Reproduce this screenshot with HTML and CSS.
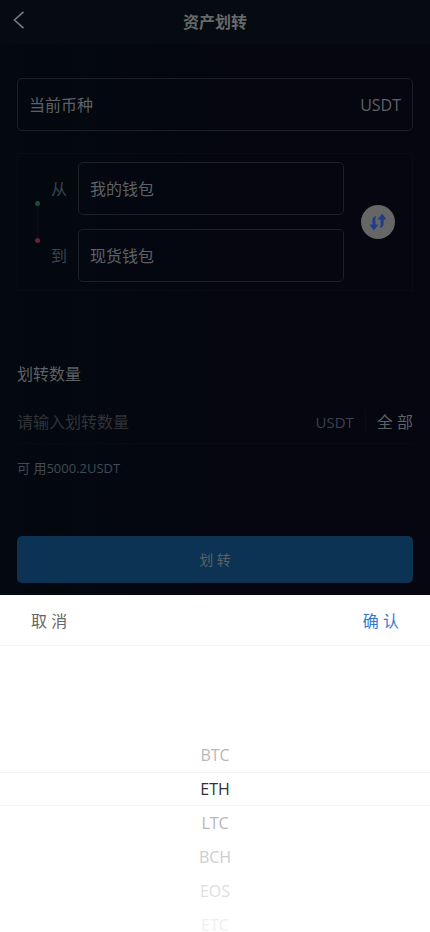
FILE: index.html
```html
<!DOCTYPE html>
<html lang="zh-CN">

<head>
    <meta charset="UTF-8">
    <meta name="viewport" content="width=device-width, initial-scale=1.0">
    <title>资产划转</title>
    <link rel="stylesheet" href="styles.css">
</head>

<body>
    <header class="nav">
        <button class="nav-back" type="button" aria-label="返回">
            <svg width="12" height="18" viewBox="0 0 12 18" fill="none" stroke="currentColor" stroke-width="1.6">
                <path d="M10.5 .8 L1.500 9 L10.5 17.200" />
            </svg>
        </button>
        <h1 class="nav-title">资产划转</h1>
    </header>

    <main class="page">
        <button class="coin" type="button">
            <span>当前币种</span>
            <span>USDT</span>
        </button>

        <section class="transfer">
            <div class="route">
                <span class="dot dot-from"></span>
                <span class="route-line"></span>
                <span class="dot dot-to"></span>
            </div>
            <div class="wallets">
                <div class="wallet-row">
                    <label class="wallet-label" for="from">从</label>
                    <select class="wallet" id="from">
                        <option>我的钱包</option>
                        <option>现货钱包</option>
                    </select>
                </div>
                <div class="wallet-row">
                    <label class="wallet-label" for="to">到</label>
                    <select class="wallet" id="to">
                        <option>现货钱包</option>
                        <option>我的钱包</option>
                    </select>
                </div>
            </div>
            <button class="swap" type="button" aria-label="交换">
                <svg width="18" height="18" viewBox="0 0 18 18">
                    <path d="M7.5 3 C4.6 3.4 3.4 5 3.4 7.5 V11.5 H.5 L4.9 17.5 L9.300 11.5 H6.400 V7 C6.400 5.200 6.600 4 7.5 3 Z" />
                    <path d="M10.5 15 C13.400 14.600 14.600 13 14.600 10.5 V6.5 H17.5 L13.100 .5 L8.700 6.5 H11.600 V11 C11.600 12.800 11.400 14 10.5 15 Z" />
                </svg>
            </button>
        </section>

        <label class="amount-title" for="amount">划转数量</label>
        <div class="amount">
            <input class="amount-input" id="amount" type="text" placeholder="请输入划转数量">
            <span class="amount-unit">USDT</span>
            <button class="amount-all" type="button">全 部</button>
        </div>
        <p class="available">可 用5000.2USDT</p>

        <button class="submit" type="button">划 转</button>
    </main>

    <section class="picker">
        <div class="picker-bar">
            <button class="picker-btn" type="button">取 消</button>
            <button class="picker-btn picker-ok" type="button">确 认</button>
        </div>
        <ul class="picker-list" role="listbox" aria-label="币种">
            <li class="picker-item near" role="option">BTC</li>
            <li class="picker-item active" role="option" aria-selected="true">ETH</li>
            <li class="picker-item near" role="option">LTC</li>
            <li class="picker-item mid" role="option">BCH</li>
            <li class="picker-item far" role="option">EOS</li>
            <li class="picker-item last" role="option">ETC</li>
        </ul>
    </section>
</body>

</html>
```
FILE: styles.css
```css
* {
    box-sizing: border-box;
}

body {
    margin: 0;
    height: 100vh;
    display: flex;
    flex-direction: column;
    overflow: hidden;
    background: linear-gradient(to right, #030910, #05060f 50%);
    color: #5e6165;
    font-family: "Open Sans", "Noto Sans CJK SC", sans-serif;
    font-size: 16px;
    line-height: 24px;
}

button,
input,
select {
    margin: 0;
    padding: 0;
    border: none;
    background: none;
    color: inherit;
    font: inherit;
}

/* top bar */
.nav {
    display: grid;
    grid-template-columns: 48px 1fr 48px;
    align-items: center;
    flex: none;
    height: 44px;
    background: #050b11;
}

.nav-back {
    display: flex;
    align-items: center;
    height: 40px;
    margin-bottom: 4px;
    padding-left: 13px;
    color: #77797c;
}

.nav-title {
    margin: 0;
    text-align: center;
    font-size: 16px;
    font-weight: bold;
    color: #66696c;
}

/* form */
.page {
    flex: none;
    display: flex;
    flex-direction: column;
    padding: 34px 17px 12px;
}

.coin {
    display: flex;
    justify-content: space-between;
    align-items: center;
    height: 53px;
    padding: 0 11px;
    border: 1px solid #1b1f28;
    border-radius: 5px;
}

.transfer {
    display: flex;
    align-items: center;
    margin-top: 22px;
    padding: 8px 17px;
    border: 1px solid #080c15;
}

.route {
    display: flex;
    flex-direction: column;
    align-items: center;
    width: 5px;
    margin-right: 11px;
}

.route-line {
    width: 1px;
    height: 32px;
    background: #0a0f18;
}

.dot {
    width: 5px;
    height: 5px;
    border-radius: 50%;
}

.dot-from {
    background: #1a4a4e;
}

.dot-to {
    background: #6b2238;
}

.wallets {
    flex: 1;
    display: flex;
    flex-direction: column;
    gap: 14px;
}

.wallet-row {
    display: flex;
    align-items: center;
}

.wallet-label {
    width: 27px;
    color: #36454f;
}

.wallet {
    flex: 1;
    min-width: 0;
    height: 53px;
    padding: 0 11px;
    border: 1px solid #1d1f29;
    border-radius: 5px;
    appearance: none;
}

.swap {
    display: flex;
    justify-content: center;
    align-items: center;
    width: 34px;
    height: 34px;
    margin-left: 17px;
    border-radius: 50%;
    background: #666;
}

.swap svg {
    fill: #1d3f8a;
}

.amount-title {
    margin-top: 71px;
}

.amount {
    display: flex;
    align-items: center;
    height: 44px;
    margin-top: 14px;
    border-bottom: 1px solid #070b14;
}

.amount-input {
    flex: 1;
    min-width: 0;
    height: 24px;
    outline: none;
}

.amount-input::placeholder {
    color: #303338;
    opacity: 1;
}

.amount-unit {
    padding-right: 11px;
    border-right: 1px solid #090d16;
    font-size: 15px;
    color: #3a4152;
}

.amount-all {
    padding-left: 11px;
}

.available {
    margin: 12px 0 0;
    font-size: 13px;
    color: #414a56;
}

.submit {
    height: 47px;
    margin-top: 56px;
    border-radius: 5px;
    background: #0d3354;
    font-size: 14px;
}

/* bottom sheet */
.picker {
    flex: 1;
    min-height: 0;
    overflow: hidden;
    background: #fff;
}

.picker-bar {
    display: flex;
    justify-content: space-between;
    align-items: center;
    height: 51px;
    padding: 2px 31px 0;
    border-bottom: 1px solid #f3f3f3;
}

.picker-btn {
    color: #666;
}

.picker-ok {
    color: #3478d4;
}

.picker-list {
    margin: 0;
    padding: 92px 0 0;
    list-style: none;
}

.picker-item {
    height: 34px;
    line-height: 34px;
    text-align: center;
}

.near {
    color: #b8b8b8;
}

.active {
    color: #303133;
    box-shadow: inset 0 1px #f3f3f3, inset 0 -1px #f3f3f3;
}

.mid {
    color: #cdcdcd;
}

.far {
    color: #dedede;
}

.last {
    color: #efefef;
}
```
